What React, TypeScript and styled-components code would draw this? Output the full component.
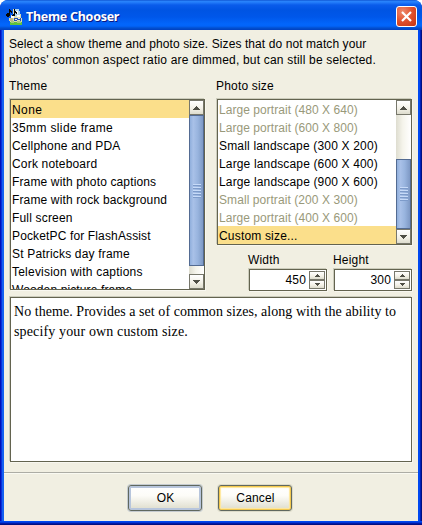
import React from "react";
import styled, { createGlobalStyle, css } from "styled-components";

const GlobalStyle = createGlobalStyle`
  *, *::before, *::after { box-sizing: border-box; }
  body { margin: 0; overflow: hidden; background: #fff; }
`;

const Window = styled.div`
  width: 422px;
  height: 525px;
  display: flex;
  flex-direction: column;
  border-radius: 8px 8px 0 0;
  overflow: hidden;
  background: linear-gradient(90deg, #0010b8 0 1px, #0830dc 1px 2px, #1460f0 2px 4px, #0050f0 4px 418px, #0048f0 418px 420px, #0020b8 420px 421px, #001080 421px);
  color: #000;
  font: 12px/18px "Liberation Sans", Arial, sans-serif;
  letter-spacing: 0.18px;
`;

const TitleBar = styled.header`
  height: 30px;
  flex: none;
  display: flex;
  align-items: center;
  padding: 3px 5px 0 6px;
  background: linear-gradient(#0848c8 0, #2a84fa 1px, #2680fb 2px, #0a5ceb 5px, #0054e3 10px, #0057ea 17px, #0266fb 24px, #0264fa 26px, #0250d0 28px, #0040c0 30px);
`;

const Title = styled.h1`
  margin: 0 auto 0 3px;
  padding-top: 1px;
  color: #fff;
  font: bold 12.5px/18px "Noto Sans", sans-serif;
  letter-spacing: -0.28px;
  text-shadow: 1px 1px 0 #0a1883;
`;

const CloseButton = styled.button`
  width: 21px;
  height: 21px;
  padding: 0;
  border: 1px solid #fff;
  border-radius: 3px;
  background: radial-gradient(circle at 30% 25%, #ee8a6c, #e0502c 50%, #c53410);
  svg { display: block; }
`;

const Body = styled.main`
  flex: none;
  width: 414px;
  height: 491px;
  margin: 0 4px;
  display: flex;
  flex-direction: column;
  background: #f1efe2;
`;

const BottomEdge = styled.div`
  height: 4px;
  background: linear-gradient(#0048f0 0 1px, #0038d8 1px 2px, #0018a8 2px 3px, #001080 3px);
`;

const Intro = styled.p`
  margin: 6px 0 0 5px;
  height: 32px;
  line-height: 16px;
  white-space: nowrap;
`;

const Line = styled.span<{ $spacing: number }>`
  display: block;
  letter-spacing: ${(p) => p.$spacing}px;
`;

const Columns = styled.div`
  display: grid;
  grid-template-columns: 195px 195px;
  column-gap: 12px;
  margin: 9px 0 0 6px;
  height: 213px;
`;

const Column = styled.section`
  display: flex;
  flex-direction: column;
`;

const Label = styled.label`
  display: block;
  height: 18px;
  margin-left: -1px;
`;

const bevel = css`
  border: 1px solid #63634f;
  box-shadow: -1px -1px 0 #ccccbc, 1px 1px 0 #f8f7f0;
  background: #fff;
`;

const ListBox = styled.div<{ $height: number }>`
  ${bevel}
  display: flex;
  height: ${(p) => p.$height}px;
  margin-top: 4px;
`;

const Items = styled.ul`
  flex: 1;
  min-width: 0;
  margin: 0;
  padding: 0;
  overflow: hidden;
  list-style: none;
`;

const Item = styled.li<{ $selected?: boolean; $dim?: boolean; $spacing?: number }>`
  height: 18px;
  line-height: 20px;
  padding-left: 1px;
  white-space: nowrap;
  color: ${(p) => (p.$dim ? "#99997a" : "#000")};
  background: ${(p) => (p.$selected ? "#fbdf8b" : "transparent")};
  letter-spacing: ${(p) => p.$spacing ?? 0.18}px;
`;

const ScrollBar = styled.div`
  width: 15px;
  flex: none;
  display: flex;
  flex-direction: column;
  background: linear-gradient(90deg, #deddd0, #f5f4eb 45%, #fff);
`;

const Arrow = styled.button<{ $w?: number; $h?: number }>`
  width: ${(p) => p.$w ?? 15}px;
  height: ${(p) => p.$h ?? 15}px;
  flex: none;
  display: flex;
  align-items: center;
  justify-content: center;
  padding: 0;
  border: 1px solid #77776b;
  background: linear-gradient(#fff, #f2f0e6 60%, #dddccd);
  svg { display: block; }
`;

const Space = styled.div<{ $height: number }>`
  height: ${(p) => p.$height}px;
`;

const Thumb = styled.div`
  flex: 1;
  display: flex;
  align-items: center;
  justify-content: center;
  border: 1px solid #536b92;
  background: linear-gradient(90deg, #90afdc 0, #a9c1e8 25%, #98b4de 60%, #7e99c5);
`;

const Grip = styled.div`
  width: 8px;
  height: 14px;
  background: repeating-linear-gradient(#c6daf8 0 1px, #7d9bca 1px 2px, transparent 2px 3px);
`;

const Fields = styled.div`
  display: grid;
  grid-template-columns: 78px 78px;
  column-gap: 7px;
  justify-content: end;
  margin-top: 6px;
`;

const Spinner = styled.div`
  ${bevel}
  height: 22px;
  display: flex;
  justify-content: flex-end;
  align-items: center;
  padding-right: 1px;
`;

const Value = styled.span`
  margin-right: 3px;
`;

const Stepper = styled.div`
  display: flex;
  flex-direction: column;
`;

const Description = styled.div`
  ${bevel}
  width: 402px;
  height: 165px;
  margin: 7px 0 0 6px;
  padding: 4px 0 0 3px;
  font: 14px/20px "Liberation Serif", "Times New Roman", serif;
  white-space: nowrap;
`;

const Footer = styled.footer`
  height: 49px;
  margin-top: 10px;
  border-top: 1px solid #adada5;
  box-shadow: inset 0 1px #fafaf2;
  display: flex;
  gap: 16px;
  padding: 12px 0 0 124px;
`;

const Button = styled.button<{ $focus?: boolean }>`
  width: 74px;
  height: 26px;
  padding: 0 0 0 1px;
  border: 1px solid #60685f;
  border-radius: 3px;
  color: #000;
  font: 12px/18px "Liberation Sans", Arial, sans-serif;
  letter-spacing: 0.18px;
  background: linear-gradient(#fff 0, #fdfcf8 40%, #dddccb);
  box-shadow: ${(p) =>
    p.$focus
      ? "inset 0 0 0 1px #f2c84e, inset 0 0 1px 2px #ffe79a, 0 0 0 1px #dddbc9"
      : "inset 0 0 0 2px #b7c5dc, 0 0 0 1px #c5cbd0"};
`;

const Triangle = ({ up = false, small = false }: { up?: boolean; small?: boolean }) => {
  const w = small ? 5 : 7;
  const h = small ? 3 : 4;
  const rows = Array.from({ length: h }, (_, i) => (up ? h - 1 - i : i));
  return (
    <svg width={w} height={h} viewBox={`0 0 ${w} ${h}`} shapeRendering="crispEdges">
      <path d={rows.map((inset, y) => `M${inset} ${y}h${w - 2 * inset}v1H${inset}z`).join("")} fill="#4f4f46" />
    </svg>
  );
};

const AppIcon = () => (
  <svg width="17" height="18" viewBox="0 0 17 18" shapeRendering="crispEdges">
    <path d="M7 1h6v2h1v3h1v4h1v7H4v-4H3v-3h2V7h2z" fill="#d9dcb4" />
    <path d="M9 1h4v2h1v4h-2v1H9z" fill="#a9d4f5" />
    <path d="M10 3h2v3h-2zM5 8h3v2H5zm6-1h3v2h-3z" fill="#fff" />
    <path d="M4 10h3v3H4z" fill="#bdb98a" />
    <path d="M8 10h7v3h-1v-1h-3v1H8z" fill="#2450b8" />
    <path d="M9 11h2v1H9zm3-1h2v1h-2z" fill="#f5f5d0" />
    <path d="M4 14h12v3H4z" fill="#5fc23c" />
    <path d="M5 13h3v2H5zm6 0h4v2h-4z" fill="#a5c87f" />
    <path d="M3 1h1v1h1v1h1v2H5V4H4v4H3v1H1V8H0V6h1V5h2zM8 1h1v2h1v1h1v2h-1V5H9v3H6V7h1V6h1z" fill="#080808" />
  </svg>
);

const Scroller = ({ before = 0, after = 0 }: { before?: number; after?: number }) => (
  <ScrollBar>
    <Arrow aria-label="Scroll up"><Triangle up /></Arrow>
    <Space $height={before} />
    <Thumb><Grip /></Thumb>
    <Space $height={after} />
    <Arrow aria-label="Scroll down"><Triangle /></Arrow>
  </ScrollBar>
);

const NumberField = ({ label, value }: { label: string; value: number }) => (
  <div>
    <Label>{label}</Label>
    <Spinner>
      <Value>{value}</Value>
      <Stepper>
        <Arrow $w={16} $h={9} aria-label={`Increase ${label}`}><Triangle up small /></Arrow>
        <Arrow $w={16} $h={9} aria-label={`Decrease ${label}`}><Triangle small /></Arrow>
      </Stepper>
    </Spinner>
  </div>
);

const themes = [
  { name: "None", spacing: 0.4 },
  { name: "35mm slide frame", spacing: 0.36 },
  { name: "Cellphone and PDA" },
  { name: "Cork noteboard" },
  { name: "Frame with photo captions", spacing: 0.14 },
  { name: "Frame with rock background", spacing: 0.14 },
  { name: "Full screen" },
  { name: "PocketPC for FlashAssist", spacing: 0.14 },
  { name: "St Patricks day frame" },
  { name: "Television with captions", spacing: 0.22 },
  { name: "Wooden picture frame", spacing: 0.12 },
];

const sizes = [
  { name: "Large portrait (480 X 640)", dim: true, spacing: 0.05 },
  { name: "Large portrait (600 X 800)", dim: true, spacing: 0.05 },
  { name: "Small landscape (300 X 200)" },
  { name: "Large landscape (600 X 400)", spacing: 0.15 },
  { name: "Large landscape (900 X 600)", spacing: 0.15 },
  { name: "Small portrait (200 X 300)", dim: true, spacing: 0.08 },
  { name: "Large portrait (400 X 600)", dim: true, spacing: 0.05 },
  { name: "Custom size..." },
];

export default function App() {
  return (
    <>
      <GlobalStyle />
      <Window>
        <TitleBar>
          <AppIcon />
          <Title>Theme Chooser</Title>
          <CloseButton aria-label="Close">
            <svg width="19" height="19" viewBox="0 0 19 19">
              <path d="M5 5l9 9M14 5l-9 9" stroke="#fff" strokeWidth="2.2" />
            </svg>
          </CloseButton>
        </TitleBar>
        <Body>
          <Intro>
            <Line $spacing={0.09}>Select a show theme and photo size. Sizes that do not match your</Line>
            <Line $spacing={0.19}>photos' common aspect ratio are dimmed, but can still be selected.</Line>
          </Intro>
          <Columns>
            <Column>
              <Label>Theme</Label>
              <ListBox $height={191}>
                <Items>
                  {themes.map((t, i) => (
                    <Item key={t.name} $selected={i === 0} $spacing={t.spacing}>{t.name}</Item>
                  ))}
                </Items>
                <Scroller after={8} />
              </ListBox>
            </Column>
            <Column>
              <Label>Photo size</Label>
              <ListBox $height={146}>
                <Items>
                  {sizes.map((s, i) => (
                    <Item key={s.name} $dim={s.dim} $selected={i === 7} $spacing={s.spacing}>{s.name}</Item>
                  ))}
                </Items>
                <Scroller before={44} />
              </ListBox>
              <Fields>
                <NumberField label="Width" value={450} />
                <NumberField label="Height" value={300} />
              </Fields>
            </Column>
          </Columns>
          <Description>
            <Line $spacing={0.05}>No theme. Provides a set of common sizes, along with the ability to</Line>
            <Line $spacing={0.14}>specify your own custom size.</Line>
          </Description>
          <Footer>
            <Button>OK</Button>
            <Button $focus>Cancel</Button>
          </Footer>
        </Body>
        <BottomEdge />
      </Window>
    </>
  );
}
